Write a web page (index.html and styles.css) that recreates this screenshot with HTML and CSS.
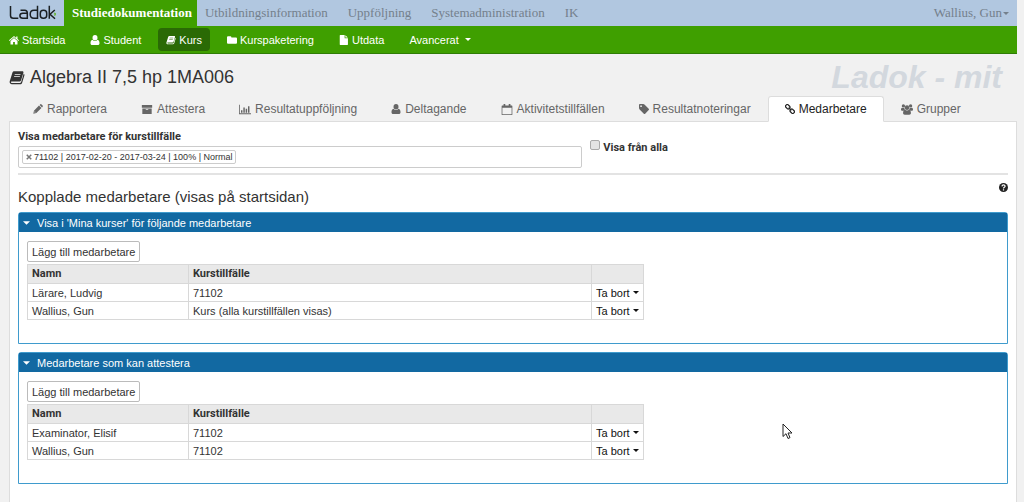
FILE: index.html
```html
<!DOCTYPE html>
<html lang="sv">
<head>
<meta charset="utf-8">
<title>Ladok - Medarbetare</title>
<link rel="stylesheet" href="styles.css">
</head>
<body>
<svg class="defs" aria-hidden="true">
  <symbol id="i-home" viewBox="0 0 16 16"><path d="M8 1.6 0 8.4l1 1.1L8 3.6l7 5.9 1-1.1-2.4-2V2.2h-2.1v2.4z"/><path d="M8 4.8 2.4 9.5V15h4.2v-4h2.8v4h4.2V9.5z"/></symbol>
  <symbol id="i-user" viewBox="0 0 16 16"><ellipse cx="8" cy="4.400" rx="4" ry="4.400"/><path d="M4 7.600C1.600 8 .8 10.300.8 13c0 1.800 1 3 2.700 3h9c1.700 0 2.700-1.200 2.700-3 0-2.700-.8-5-3.200-5.400C11 8.900 9.500 9.700 8 9.700s-3-.8-4-2.100z"/></symbol>
  <symbol id="i-book" viewBox="0 0 18 16"><path fill-rule="evenodd" d="M6 1h9c1 0 1.500.7 1.200 1.600l-2.600 8.600c-.3.9-1 1.400-2 1.400H2.900c-.6 0-.8.4-.6.9.2.400.6.6 1.200.6h9c.6 0 1-.3 1.200-.9l2.800-9.300c.8.4 1.100 1 .8 1.900l-2.600 8.300c-.3 1-1.200 1.500-2.100 1.500H3.300C1.500 15.600.2 14 .8 12.300L3.900 2.500C4.300 1.500 5 1 6 1zm.6 3-.3.900h6.500l.3-.9zm-.7 2.300-.3.9h6.500l.3-.9z"/></symbol>
  <symbol id="i-folder" viewBox="0 0 16 16"><path d="M0 3.500C0 2.500.7 2 1.600 2h3.800C6.400 2 7 2.600 7 3.500V4h7.400c1 0 1.600.6 1.600 1.500v7c0 1-.6 1.500-1.600 1.500H1.600C.7 14 0 13.500 0 12.500z"/></symbol>
  <symbol id="i-file" viewBox="0 0 14 16"><path d="M1 0h7v5.200h5.300v10c0 .5-.3.800-.8.800H1c-.5 0-.8-.3-.8-.8V.8C.2.300.5 0 1 0zm8.200.2 4 3.800H9.200z"/></symbol>
  <symbol id="i-pencil" viewBox="0 0 16 16"><path fill-rule="evenodd" d="M.5 15.500l1-4.900 8.100-8.100 3.900 3.900-8.100 8.100zm1.800-1.800 2-.4-1.600-1.600zM10.600 1.600l1-1c.6-.6 1.300-.6 1.900 0l1.900 1.900c.6.6.6 1.300 0 1.900l-1 1z"/></symbol>
  <symbol id="i-box" viewBox="0 0 16 16"><path fill-rule="evenodd" d="M.5 1.500h15v4H.5zM1.200 6.400h13.600v8.100H1.200zm5 1.300v1.200h3.600V7.700z"/></symbol>
  <symbol id="i-chart" viewBox="0 0 18 16"><path d="M0 1h1.200v12.800H18V15H0zM3 9h2.200v3.800H3zM6.500 5h2.200v7.800H6.500zM10 7h2.200v5.800H10zM13.500 3h2.200v9.800h-2.200z"/></symbol>
  <symbol id="i-cal" viewBox="0 0 16 16"><path fill-rule="evenodd" d="M3 0h2.500v2h5V0H13v2h2c.5 0 .8.300.8.800v12.400c0 .5-.3.800-.8.800H1c-.5 0-.8-.3-.8-.8V2.800C.2 2.300.5 2 1 2h2zM1.300 5.600v9.300h13.400V5.600z"/></symbol>
  <symbol id="i-tag" viewBox="0 0 16 16"><path fill-rule="evenodd" d="M0 1.700C0 .700.700 0 1.700 0h5c.9 0 1.800.4 2.400 1l6.400 6.500c.7.700.7 1.500 0 2.200l-5.600 5.700c-.7.700-1.500.700-2.200 0L1 8.900C.4 8.300 0 7.400 0 6.500zm1.900 1.700c0 .8.600 1.400 1.400 1.400s1.400-.6 1.400-1.400S4.100 2 3.300 2s-1.400.6-1.400 1.400z"/></symbol>
  <symbol id="i-link" viewBox="0 0 16 16"><g fill="none" stroke="currentColor" stroke-width="2" stroke-linecap="round" stroke-linejoin="round"><rect x="-3.600" y="-2.600" width="7.200" height="5.200" rx="2" transform="translate(4.400 4.400) rotate(45)"/><rect x="-3.600" y="-2.600" width="7.200" height="5.200" rx="2" transform="translate(11.600 11.600) rotate(45)"/><path d="M6.500 6.500l3 3"/></g></symbol>
  <symbol id="i-group" viewBox="0 0 18 16"><circle cx="3.600" cy="2.600" r="2.500"/><circle cx="14.400" cy="2.600" r="2.500"/><circle cx="9" cy="5.200" r="3.400"/><path d="M1.600 5.300C.4 5.600 0 6.700 0 8.500 0 9.500.6 10 1.500 10h2.600c.4-.8 1-1.300 1.800-1.600-.6-.8-.9-1.700-.9-2.900-1.200.5-2.400.4-3.400-.2zM16.400 5.300c1.200.3 1.600 1.400 1.600 3.200 0 1-.6 1.500-1.500 1.500h-2.600c-.4-.8-1-1.300-1.800-1.600.6-.8.900-1.700.9-2.900 1.200.5 2.400.4 3.400-.2z"/><path d="M6 8.500c-1.800.3-2.900 2.400-2.900 4.800 0 1.700 1 2.500 2.400 2.500h7c1.400 0 2.400-.8 2.400-2.500 0-2.400-1.100-4.500-2.900-4.800-1.800 1.500-4.200 1.500-6 0z"/></symbol>
  <symbol id="i-help" viewBox="0 0 16 16"><circle cx="8" cy="8" r="8"/><path d="M5.300 6c.1-3.300 5.500-3.200 5.500-.2C10.800 7.800 8 7.700 8 9.700M8 11.200v2" fill="none" stroke="#fff" stroke-width="2.200"/></symbol>
  <symbol id="i-caret" viewBox="0 0 8 4"><path d="M0 0h8L4 4z"/></symbol>
  <symbol id="i-x" viewBox="0 0 8 8"><path d="M1 1l6 6M7 1 1 7" stroke="currentColor" stroke-width="2"/></symbol>
</svg>

<header>
  <nav class="topbar" aria-label="Huvudmeny">
    <a class="logo" href="#" aria-label="Ladok">
      <svg viewBox="0 0 48 18"><g fill="none" stroke="#1b2023" stroke-width="1.500"><path d="M2.500 2v9.500q0 2.800 2.800 2.800h5"/><path d="M12.500 6.300h4.200q2.600 0 2.600 2.800v5.200h-4.400q-3 0-3-2.500t3-2.500h4.400"/><path d="M29.500 1.800v12.500h-3.600q-3.700 0-3.700-4t3.700-4h3.600"/><rect x="32.300" y="6.300" width="6.400" height="8" rx="3"/><path d="M41.300 1.800v12.900M46.800 6l-4.800 4.200 5 4.500"/><path d="M46.200 9l1.800 1.200-1.800 1.200" stroke="#6bb33e"/></g></svg>
    </a>
    <a class="area area-active" href="#">Studiedokumentation</a>
    <a class="area" href="#">Utbildningsinformation</a>
    <a class="area" href="#">Uppföljning</a>
    <a class="area" href="#">Systemadministration</a>
    <a class="area" href="#">IK</a>
    <button class="account" type="button">Wallius, Gun<svg class="caret"><use href="#i-caret"/></svg></button>
  </nav>
  <nav class="menu" aria-label="Studiedokumentation">
    <a class="menu-item" href="#"><svg class="icon"><use href="#i-home"/></svg>Startsida</a>
    <a class="menu-item" href="#"><svg class="icon"><use href="#i-user"/></svg>Student</a>
    <a class="menu-item menu-active" href="#"><svg class="icon"><use href="#i-book"/></svg>Kurs</a>
    <a class="menu-item" href="#"><svg class="icon"><use href="#i-folder"/></svg>Kurspaketering</a>
    <a class="menu-item" href="#"><svg class="icon"><use href="#i-file"/></svg>Utdata</a>
    <button class="menu-item" type="button">Avancerat<svg class="caret caret-gap"><use href="#i-caret"/></svg></button>
  </nav>
</header>

<main>
  <div class="title-row">
    <h1><svg class="title-icon"><use href="#i-book"/></svg>Algebra II 7,5 hp 1MA006</h1>
    <span class="environment">Ladok - mit</span>
  </div>

  <nav class="tabs" aria-label="Kurs">
    <a class="tab" href="#"><svg class="icon"><use href="#i-pencil"/></svg>Rapportera</a>
    <a class="tab" href="#"><svg class="icon icon-wide"><use href="#i-box"/></svg>Attestera</a>
    <a class="tab" href="#"><svg class="icon icon-wide"><use href="#i-chart"/></svg>Resultatuppföljning</a>
    <a class="tab" href="#"><svg class="icon"><use href="#i-user"/></svg>Deltagande</a>
    <a class="tab" href="#"><svg class="icon icon-wide"><use href="#i-cal"/></svg>Aktivitetstillfällen</a>
    <a class="tab" href="#"><svg class="icon"><use href="#i-tag"/></svg>Resultatnoteringar</a>
    <a class="tab tab-active" href="#" aria-current="page"><svg class="icon"><use href="#i-link"/></svg>Medarbetare</a>
    <a class="tab" href="#"><svg class="icon icon-wide"><use href="#i-group"/></svg>Grupper</a>
  </nav>

  <section class="content">
    <form class="filter">
      <div class="filter-field">
        <label for="occasion">Visa medarbetare för kurstillfälle</label>
        <div class="token-box">
          <span class="token"><button class="token-remove" type="button" aria-label="Ta bort val"><svg><use href="#i-x"/></svg></button>71102 | 2017-02-20 - 2017-03-24 | 100% | Normal</span>
          <input class="token-input" id="occasion" type="text">
        </div>
      </div>
      <div class="show-all"><input class="check" id="all" type="checkbox"><label for="all">Visa från alla</label></div>
    </form>

    <div class="section-head">
      <h2>Kopplade medarbetare (visas på startsidan)</h2>
      <button class="help" type="button" aria-label="Hjälp"><svg><use href="#i-help"/></svg></button>
    </div>

    <section class="panel">
      <button class="panel-head" type="button" aria-expanded="true"><svg class="caret"><use href="#i-caret"/></svg>Visa i 'Mina kurser' för följande medarbetare</button>
      <div class="panel-body">
        <button class="add" type="button">Lägg till medarbetare</button>
        <table>
          <thead><tr><th class="col-name">Namn</th><th>Kurstillfälle</th><th class="col-action"></th></tr></thead>
          <tbody>
            <tr><td>Lärare, Ludvig</td><td>71102</td><td><button class="remove" type="button">Ta bort<svg class="caret"><use href="#i-caret"/></svg></button></td></tr>
            <tr><td>Wallius, Gun</td><td>Kurs (alla kurstillfällen visas)</td><td><button class="remove" type="button">Ta bort<svg class="caret"><use href="#i-caret"/></svg></button></td></tr>
          </tbody>
        </table>
      </div>
    </section>

    <section class="panel">
      <button class="panel-head" type="button" aria-expanded="true"><svg class="caret"><use href="#i-caret"/></svg>Medarbetare som kan attestera</button>
      <div class="panel-body">
        <button class="add" type="button">Lägg till medarbetare</button>
        <table>
          <thead><tr><th class="col-name">Namn</th><th>Kurstillfälle</th><th class="col-action"></th></tr></thead>
          <tbody>
            <tr><td>Examinator, Elisif</td><td>71102</td><td><button class="remove" type="button">Ta bort<svg class="caret"><use href="#i-caret"/></svg></button></td></tr>
            <tr><td>Wallius, Gun</td><td>71102</td><td><button class="remove" type="button">Ta bort<svg class="caret"><use href="#i-caret"/></svg></button></td></tr>
          </tbody>
        </table>
      </div>
    </section>
  </section>
</main>
<svg class="pointer" viewBox="0 0 11 17" aria-hidden="true"><path d="M1 1v12.500l3-2.800 2 4.800 2-.9-2-4.600h4z" fill="#fff" stroke="#222"/></svg>
</body>
</html>
```
FILE: styles.css
```css
* { box-sizing: border-box; }

body {
  margin: 0;
  padding-right: 7px;
  min-height: 100vh;
  display: flex;
  flex-direction: column;
  background: #f1f1f1;
  color: #333;
  font: 11px/14px "Liberation Sans", Arial, sans-serif;
}

a { color: inherit; text-decoration: none; }
button { font: inherit; color: inherit; background: none; border: 0; padding: 0; }
svg { fill: currentColor; }
.defs { display: none; }
.icon { width: 10px; height: 10px; flex: none; }
.icon-wide { width: 12px; height: 11px; }
.caret { width: 6px; height: 3px; flex: none; }

.topbar {
  display: flex;
  height: 26px;
  background: #b1c7e0;
  color: #74808c;
  font: 13px/26px "Liberation Serif", serif;
}
.logo { width: 64px; padding: 4px 0 0 8px; }
.logo svg { display: block; width: 48px; height: 18px; }
.area { padding: 0 12px 0 8px; }
.area-active { padding-right: 5px; background: #3f9f00; color: #fff; font-weight: bold; }
.account { margin-left: auto; padding-right: 8px; display: flex; align-items: center; gap: 1px; }

.menu {
  display: flex;
  align-items: center;
  height: 28px;
  padding-left: 1px;
  gap: 9px;
  background: #3f9f00;
  border-bottom: 1px solid #2f7d05;
  color: #fff;
}
.menu-item { display: flex; align-items: center; gap: 3px; height: 23px; padding: 0 8px; }
.menu-active { background: #2a6a05; border-radius: 4px; }
.caret-gap { margin-left: 3px; }

main { flex: 1; display: flex; flex-direction: column; padding-left: 9px; }
.title-row { display: flex; justify-content: space-between; height: 42px; padding: 4px 15px 0 0; }
h1 { margin: 0; display: flex; align-items: center; gap: 5px; font-size: 18px; line-height: 20px; font-weight: normal; }
.title-icon { width: 16px; height: 15px; }
.environment { color: #d3d8de; font: italic bold 32px/38px "Liberation Sans", Arial, sans-serif; }

.tabs { display: flex; height: 26px; padding-left: 7px; border-bottom: 1px solid #ddd; font-size: 12px; color: #666; }
.tab { display: flex; align-items: center; gap: 4px; height: 26px; padding: 0 16px; border: 1px solid transparent; border-radius: 3px 3px 0 0; }
.tab-active { background: #fff; border-color: #ddd #ddd #fff; color: #222; }

.content { flex: 1; background: #fff; border: 1px solid #ddd; border-width: 0 1px; padding: 8px 8px 0; }
.filter { display: flex; gap: 8px; padding-bottom: 5px; border-bottom: 2px solid #e3e3e3; font-family: Roboto, sans-serif; font-weight: bold; }
.filter-field { width: 57%; }
.filter-field label { display: block; margin-bottom: 2px; }
.token-box { display: flex; height: 22px; padding: 3px; border: 1px solid #ccc; border-radius: 2px; }
.token { display: flex; align-items: center; padding: 0 3px; border: 1px solid #ccc; border-radius: 2px; font-family: "Liberation Sans", Arial, sans-serif; font-size: 9px; font-weight: normal; gap: 2px; white-space: nowrap; }
.token-remove { display: flex; color: #777; }
.token-remove svg { width: 6px; height: 6px; }
.token-input { flex: 1; min-width: 0; border: 0; outline: 0; }
.show-all { display: flex; gap: 3px; padding-top: 10px; }
.show-all label { padding-top: 1px; }
.check { appearance: none; width: 10px; height: 10px; margin: 0; border: 1px solid #aaa; border-radius: 2px; background: #e4e4e4; }

.section-head { display: flex; justify-content: space-between; align-items: flex-start; padding: 8px 0 6px; }
h2 { margin: 0; padding-top: 5px; font-size: 15px; line-height: 18px; font-weight: normal; }
.help svg { display: block; width: 9px; height: 9px; color: #222; }

.panel { min-height: 132px; margin-bottom: 8px; border: 1px solid #3f9bcd; border-radius: 3px 3px 0 0; }
.panel-head { display: flex; align-items: center; gap: 7px; width: 100%; height: 19px; padding: 0 4px; background: #1269a2; color: #fff; }
.panel-head .caret { width: 7px; height: 4px; }
.panel-body { padding: 9px 8px 0; }
.add { display: block; height: 21px; padding: 0 4px; border: 1px solid #bbb; border-radius: 2px; margin-bottom: 2px; background: #fff; }
table { width: 617px; max-width: 100%; border-collapse: collapse; table-layout: fixed; }
th, td { height: 19px; padding: 0 4px; border: 1px solid #d8d8d8; text-align: left; }
td { height: 18px; }
th { background: #e9e9e9; font-family: Roboto, sans-serif; }
.col-name { width: 161px; }
.col-action { width: 52px; }
.remove { display: flex; align-items: center; gap: 3px; color: #111; white-space: nowrap; }

.pointer { position: absolute; left: 782px; top: 423px; width: 11px; height: 17px; }
```
